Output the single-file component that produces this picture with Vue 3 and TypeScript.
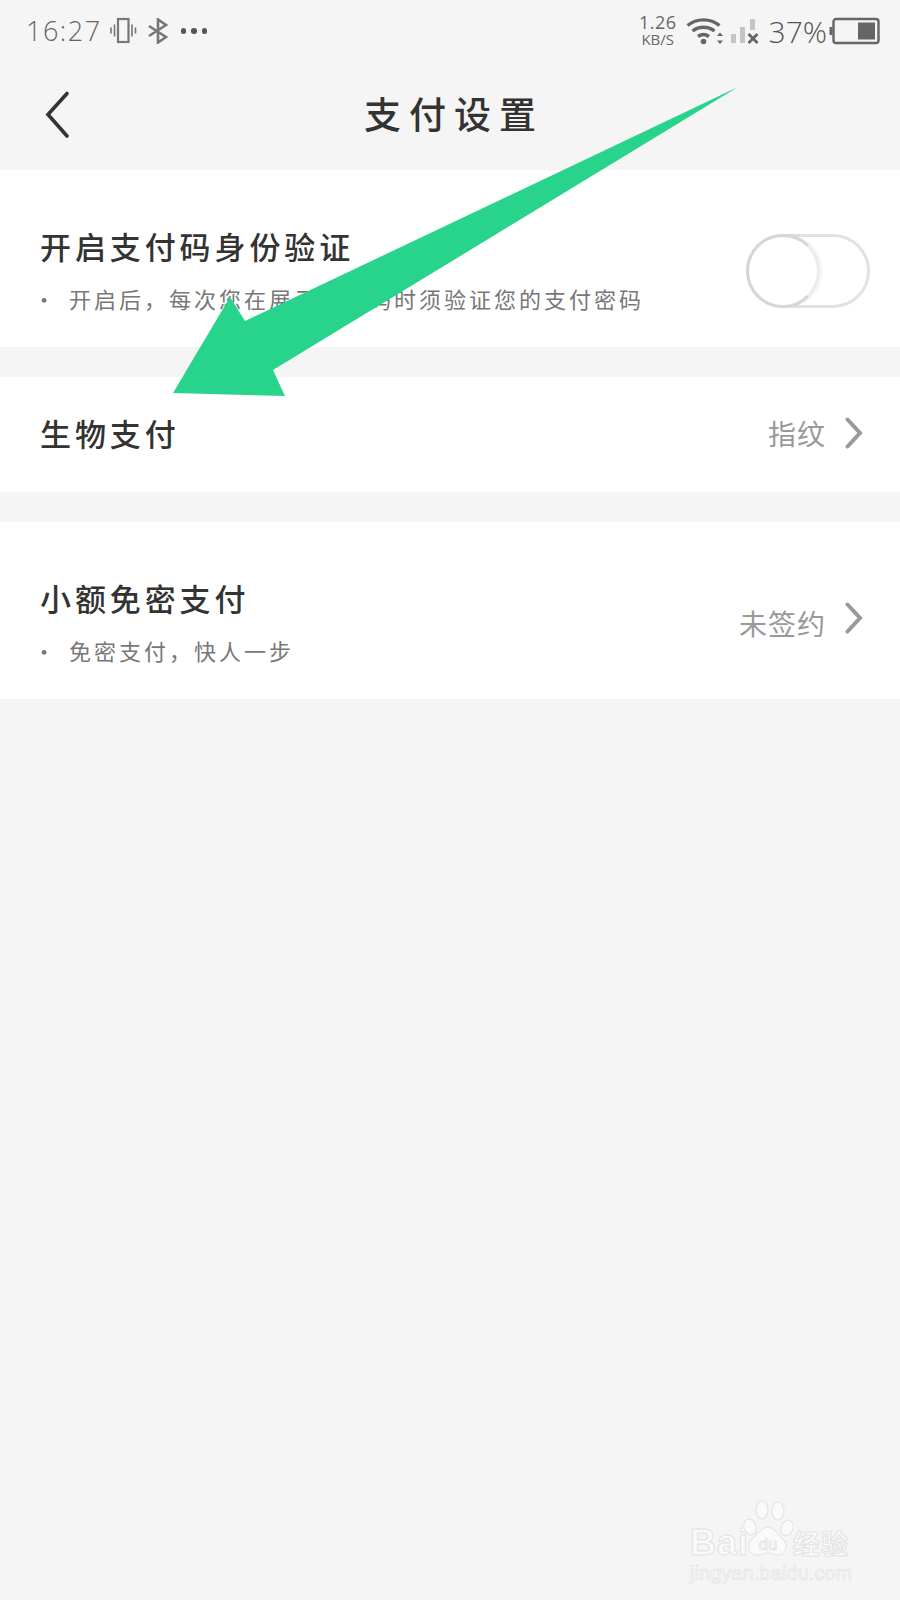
<template>
  <div class="phone">
    <div class="status-bar">
      <div class="status-left">
        <span class="time">16:27</span>
        <svg class="ic-vibrate" width="28" height="28" viewBox="0 0 28 28" fill="none" stroke="#777">
          <rect x="9" y="2" width="10.5" height="23" stroke-width="2.2" />
          <path d="M5.5 7.5v12M2 10.5v6M23 7.5v12M26.5 10.5v6" stroke-width="1.6" />
        </svg>
        <svg class="ic-bt" width="22" height="26" viewBox="0 0 22 26" fill="none" stroke="#777" stroke-width="2.6">
          <path d="M2 8l17 11-8 5.5V1.5L19 7 2 18" />
        </svg>
        <span class="dots"><i></i><i></i><i></i></span>
      </div>
      <div class="status-right">
        <div class="speed"><span class="speed-num">1.26</span><span class="speed-unit">KB/S</span></div>
        <svg class="ic-wifi" width="38" height="28" viewBox="0 0 38 28" fill="none" stroke="#666" stroke-width="3.4">
          <path d="M1.5 8.5C10.5 1 24.5 1 33.5 8.5M6.5 14C13 9 22 9 28.5 14M12 19.5c3.500-2.500 7.500-2.500 11 0" />
          <circle cx="17.500" cy="24.500" r="2.800" fill="#666" stroke="none" />
          <path d="M34 15.500l-3 3.500h6zM34 27l-3-3.500h6z" fill="#666" stroke="none" />
        </svg>
        <svg class="ic-signal" width="28" height="28" viewBox="0 0 28 28">
          <rect x="0" y="17" width="5" height="9" fill="#c4c4c4" />
          <rect x="9" y="10" width="5" height="16" fill="#c4c4c4" />
          <rect x="19" y="2" width="5" height="11" fill="#c4c4c4" />
          <path d="M17.500 17l9 9M26.500 17l-9 9" stroke="#666" stroke-width="2.800" />
        </svg>
        <span class="percent">37%</span>
        <svg class="ic-battery" width="52" height="28" viewBox="0 0 52 28" fill="none">
          <rect x="4.500" y="2" width="45" height="24" rx="2.500" stroke="#666" stroke-width="2.400" />
          <rect x="0.500" y="10" width="3" height="8" fill="#666" />
          <rect x="29" y="5.500" width="17" height="17" fill="#666" />
        </svg>
      </div>
    </div>

    <header class="nav-bar">
      <svg class="ic-back" width="28" height="50" viewBox="0 0 28 50" fill="none" stroke="#333" stroke-width="3.600" stroke-linecap="round">
        <path d="M24 3.500 5 24.500 24 46" />
      </svg>
      <h1 class="nav-title">支付设置</h1>
    </header>

    <section class="card card-tall">
      <div class="card-text">
        <div class="card-title">开启支付码身份验证</div>
        <div class="card-sub"><span class="bullet">·</span>开启后，每次您在展示付款码时须验证您的支付密码</div>
      </div>
      <div class="toggle" :class="{ on: verifyOn }" @click="verifyOn = !verifyOn">
        <div class="knob"></div>
      </div>
    </section>

    <section class="card card-short">
      <div class="card-title">生物支付</div>
      <div class="card-value">
        <span>指纹</span>
        <svg width="18" height="32" viewBox="0 0 18 32" fill="none" stroke="#999" stroke-width="4" stroke-linecap="round">
          <path d="M2.500 2.500 15 16 2.500 29.500" />
        </svg>
      </div>
    </section>

    <section class="card card-tall">
      <div class="card-text">
        <div class="card-title">小额免密支付</div>
        <div class="card-sub"><span class="bullet">·</span>免密支付，快人一步</div>
      </div>
      <div class="card-value value-offset">
        <span>未签约</span>
        <svg width="18" height="32" viewBox="0 0 18 32" fill="none" stroke="#999" stroke-width="4" stroke-linecap="round">
          <path d="M2.500 2.500 15 16 2.500 29.500" />
        </svg>
      </div>
    </section>

    <svg class="arrow" width="900" height="500" viewBox="0 0 900 500">
      <polygon points="173,393 285,396 273,370 738,87 245,321 230,297" fill="#28d48c" />
    </svg>

    <div class="watermark">
      <div class="wm-top">
        <span class="wm-bai">Bai</span>
        <svg class="wm-paw" width="50" height="64" viewBox="0 0 50 64" fill="#fafafa" stroke="#e4e4e4" stroke-width="1.200">
          <ellipse cx="7" cy="27" rx="6" ry="8" transform="rotate(-18 7 27)" />
          <ellipse cx="19" cy="10" rx="6" ry="9" />
          <ellipse cx="35" cy="11" rx="6" ry="9" />
          <ellipse cx="44" cy="28" rx="6" ry="8" transform="rotate(20 44 28)" />
          <path d="M25 27c7 0 9 7 14 11 6 5 6 16-3 17-5 .6-7-2-11-2s-7 2.600-12 2c-9-1-9-12-3-17 5-4 8-11 15-11z" />
          <text x="25" y="50" text-anchor="middle" class="wm-du">du</text>
        </svg>
        <span class="wm-cn">经验</span>
      </div>
      <div class="wm-url">jingyan.baidu.com</div>
    </div>
  </div>
</template>

<script setup lang="ts">
import { ref } from 'vue';

const verifyOn = ref(false);
</script>

<style>
html, body { margin: 0; background: #f5f5f5; }
</style>

<style scoped>
.phone {
  position: relative;
  width: 900px;
  height: 1600px;
  overflow: hidden;
  background: #f5f5f5;
  font-family: "Noto Sans CJK SC", "Liberation Sans", sans-serif;
}

.status-bar {
  height: 62px;
  padding: 0 19px 0 26px;
  display: flex;
  justify-content: space-between;
  align-items: center;
  color: #777;
  box-sizing: border-box;
}
.status-left, .status-right { display: flex; align-items: center; }
.time {
  font-family: "Open Sans", sans-serif;
  font-weight: 300;
  font-size: 27px;
  letter-spacing: 1.5px;
  line-height: 32px;
  color: #666;
}
.ic-vibrate { margin-left: 7px; }
.ic-bt { margin-left: 10px; }
.dots { display: flex; gap: 5px; margin-left: 12px; }
.dots i { width: 5.5px; height: 5.5px; border-radius: 50%; background: #555; }

.speed {
  display: flex;
  flex-direction: column;
  align-items: center;
  color: #666;
  font-family: "Open Sans", sans-serif;
  margin-top: -3px;
}
.speed-num { font-size: 18px; line-height: 18px; letter-spacing: 0.5px; }
.speed-unit { font-size: 15px; line-height: 14px; margin-top: 1px; }
.ic-wifi { margin-left: 9px; }
.ic-signal { margin-left: 7px; }
.percent {
  font-family: "Open Sans", sans-serif;
  font-weight: 300;
  font-size: 30px;
  color: #555;
  margin-left: 10px;
}
.ic-battery { margin-left: 2px; }

.nav-bar {
  height: 108px;
  position: relative;
  display: flex;
  align-items: center;
  justify-content: center;
  padding: 0 0 6px 8px;
  box-sizing: border-box;
}
.ic-back { position: absolute; left: 43px; top: 28px; }
.nav-title {
  margin: 0;
  font-size: 37px;
  font-weight: 500;
  letter-spacing: 8px;
  color: #333;
  line-height: 48px;
}

.card {
  background: #fff;
  display: flex;
  align-items: center;
  justify-content: space-between;
  padding: 0 37px 0 40px;
  margin-bottom: 30px;
  box-sizing: border-box;
}
.card-tall { height: 177px; }
.card-short { height: 115px; padding-bottom: 4px; }
.card-text { display: flex; flex-direction: column; gap: 15.5px; padding-top: 20px; }
.card-title {
  font-size: 31px;
  font-weight: 500;
  letter-spacing: 3.900px;
  color: #333;
  line-height: 44px;
}
.card-sub {
  font-size: 22px;
  letter-spacing: 3px;
  color: #777;
  line-height: 30px;
  display: flex;
}
.bullet { width: 36px; margin-left: -7px; flex: none; }
.card-value {
  display: flex;
  align-items: center;
  gap: 19px;
  font-size: 28px;
  letter-spacing: 1px;
  color: #999;
  line-height: 38px;
}
.value-offset { margin-top: 14px; }
.value-offset span { padding-top: 10px; }

.toggle {
  width: 124px;
  height: 74px;
  margin-right: -7px;
  margin-top: 25px;
  border: 3px solid #e2e2e2;
  border-radius: 37px;
  box-sizing: border-box;
  position: relative;
  background: #fff;
}
.knob {
  position: absolute;
  left: -3px;
  top: -3px;
  width: 74px;
  height: 74px;
  box-sizing: border-box;
  border: 3px solid #d6d6d6;
  border-right-color: #ececec;
  border-radius: 50%;
  background: #fff;
  box-shadow: 2px 0 3px rgba(0, 0, 0, 0.05);
}

.arrow { position: absolute; left: 0; top: 0; pointer-events: none; }

.watermark {
  position: absolute;
  left: 690px;
  top: 1500px;
  width: 170px;
  color: #fafafa;
  font-family: "Liberation Sans", sans-serif;
}
.wm-top { display: flex; align-items: flex-end; height: 60px; }
.wm-bai {
  font-size: 36px;
  font-weight: 700;
  line-height: 34px;
  letter-spacing: 1px;
  -webkit-text-stroke: 1px #e2e2e2;
}
.wm-paw { margin-left: -6px; flex: none; margin-bottom: -4px; }
.wm-du {
  font-family: "Liberation Sans", sans-serif;
  font-size: 17px;
  fill: #fafafa;
  stroke: #e0e0e0;
  stroke-width: 0.700;
}
.wm-cn {
  font-family: "Noto Sans CJK SC", sans-serif;
  font-size: 27px;
  font-weight: 700;
  line-height: 34px;
  letter-spacing: 1px;
  -webkit-text-stroke: 1px #e2e2e2;
}
.wm-url {
  font-size: 19.500px;
  line-height: 22px;
  margin-top: 2px;
  letter-spacing: 0.300px;
  -webkit-text-stroke: 0.700px #e2e2e2;
  white-space: nowrap;
}
</style>
